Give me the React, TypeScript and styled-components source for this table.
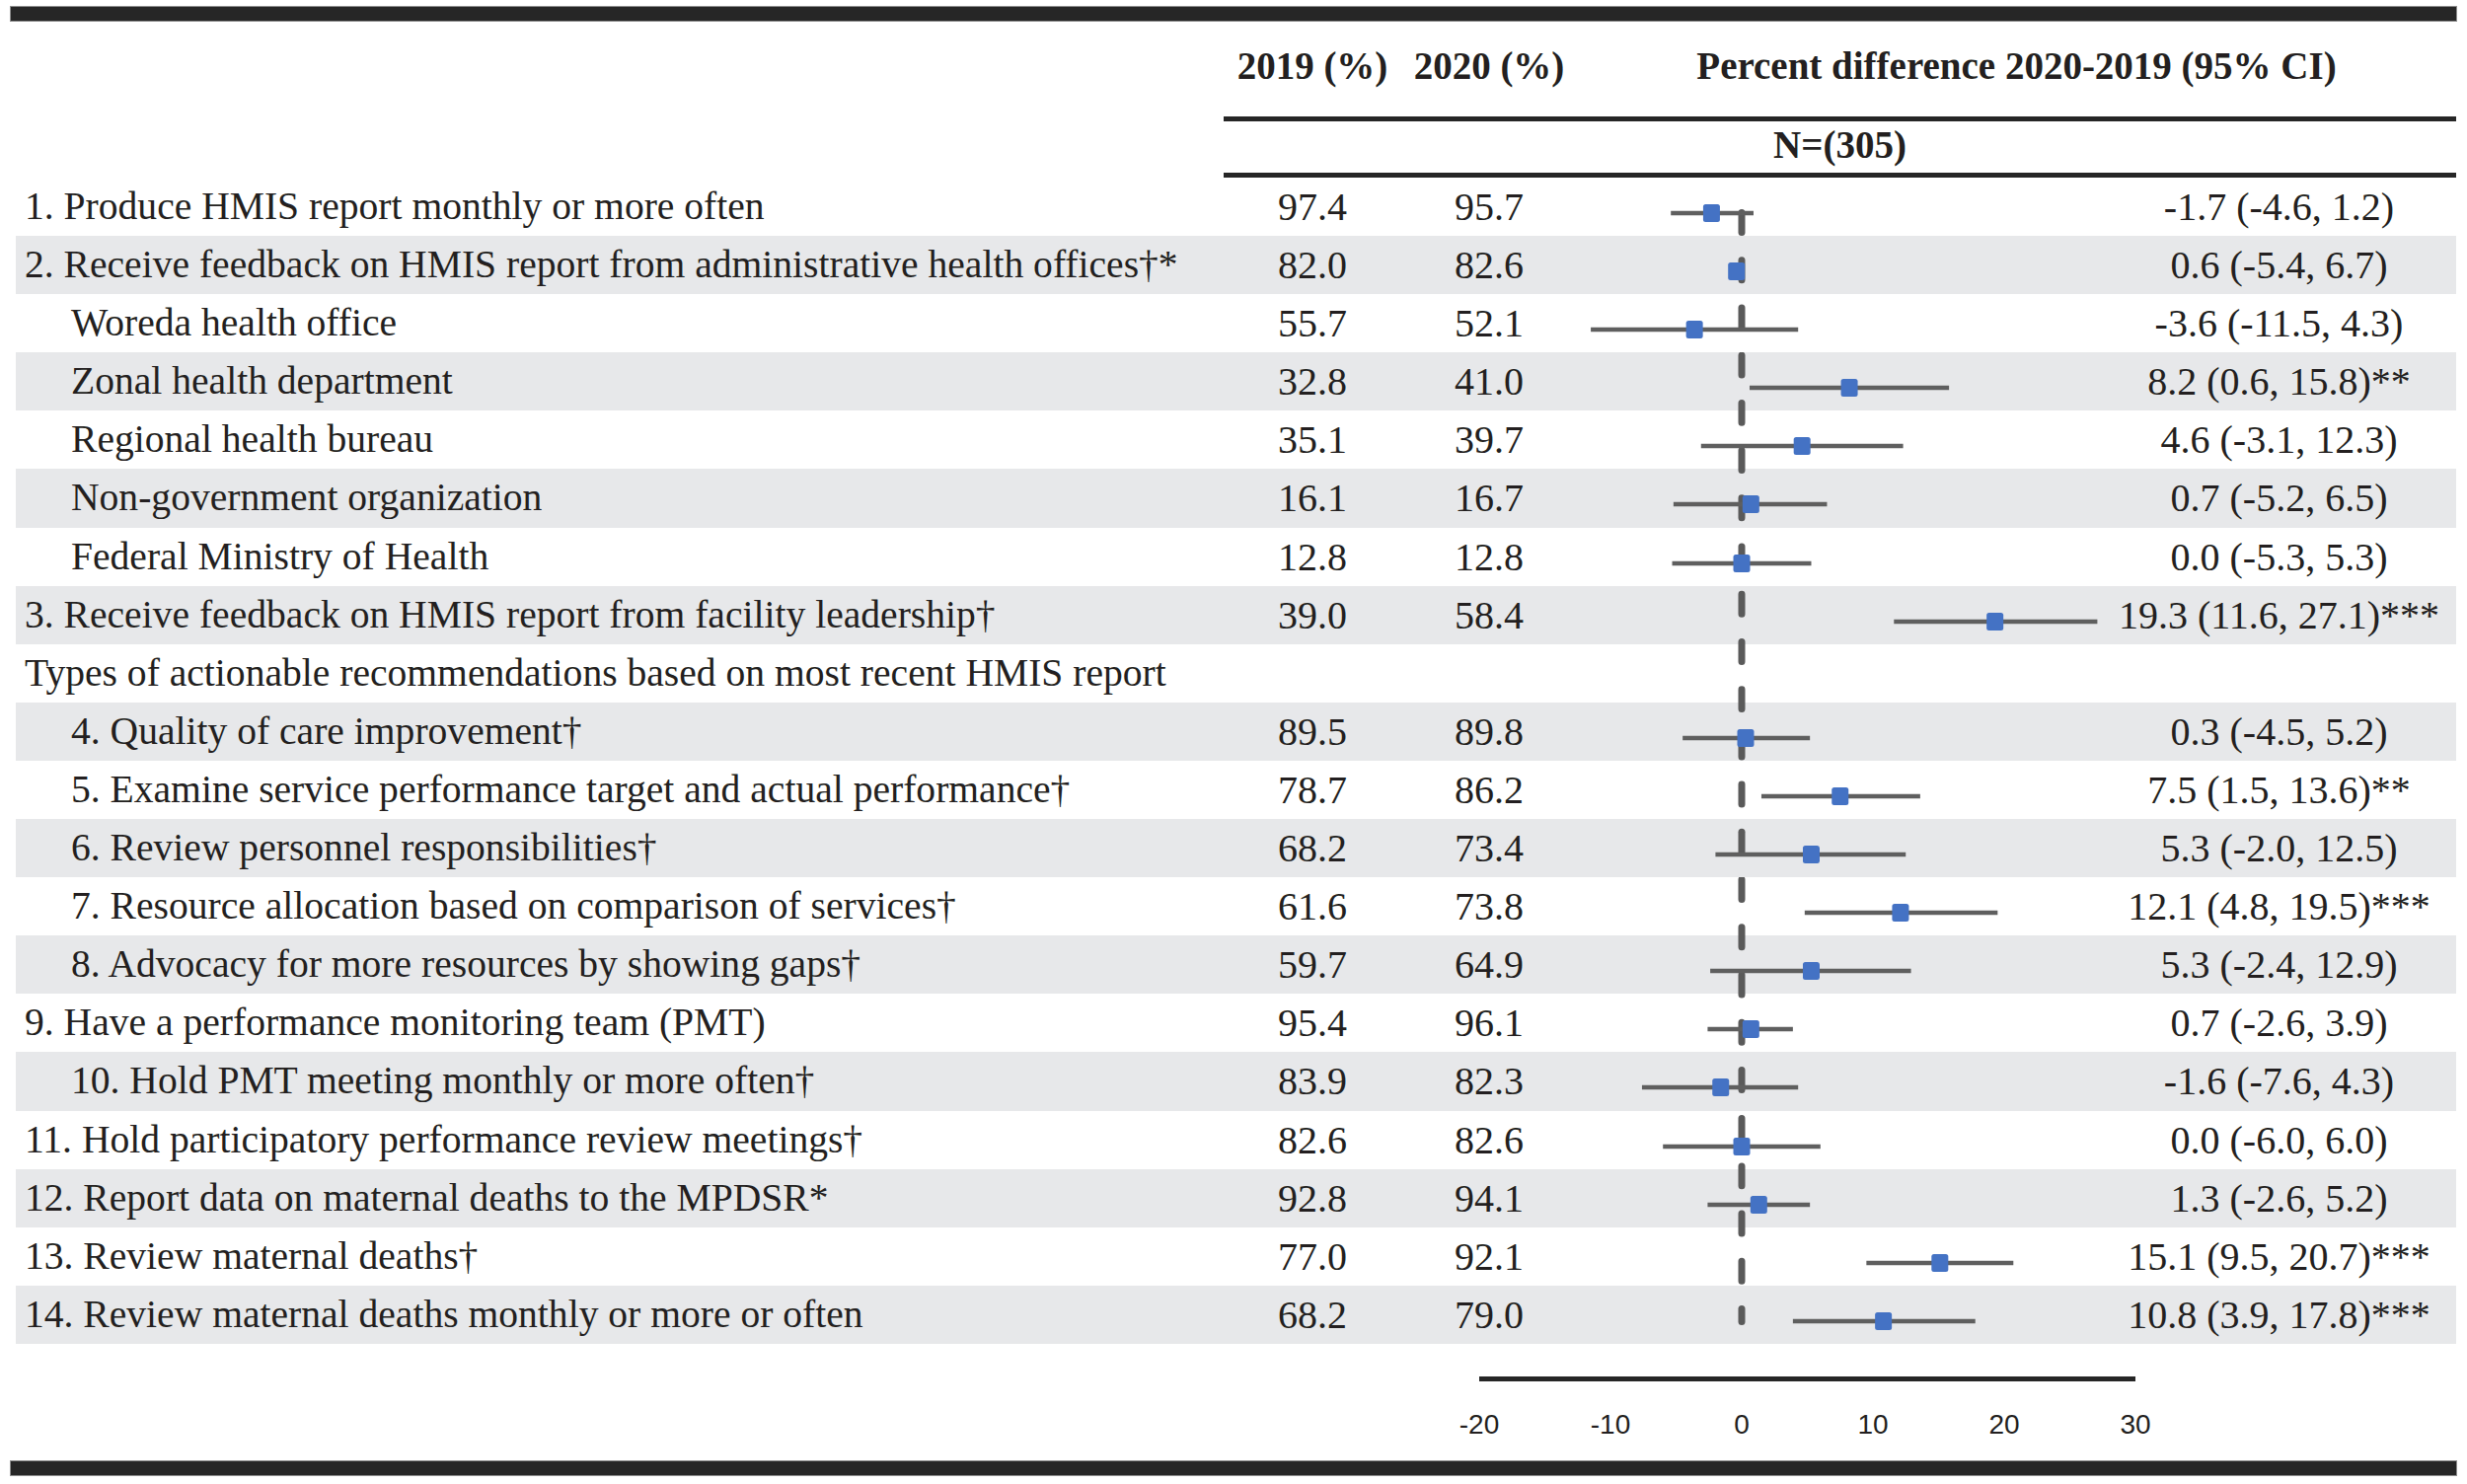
import React from "react";
import styled, { createGlobalStyle } from "styled-components";

const ROW_H = 59.1;
const ROWS_TOP = 180;
const PLOT_W = 532;
const ZERO_X = 167;
const UNIT = 13.3;
const DASH_START = 215.5;
const DASH_END = 1339.5;

const GlobalStyle = createGlobalStyle`
  html, body { margin: 0; padding: 0; background: #ffffff; }
  body { font-family: "Liberation Serif", "Times New Roman", serif; color: #231f20; }
`;

const Page = styled.div`
  width: 2500px;
  height: 1504px;
  padding: 7px 11px 0 11px;
  box-sizing: border-box;
`;

const Rule = styled.div`
  height: 14px;
  background: #262626;
  box-shadow: 0 0 0 1px #8c8c8c;
`;

const Table = styled.div`
  padding-left: 5px;
  display: flex;
  flex-direction: column;
`;

const Header = styled.div`
  display: grid;
  grid-template-columns: 1224px 1fr;
`;

const HeadRight = styled.div`
  display: flex;
  flex-direction: column;
`;

const TitleRow = styled.div`
  display: grid;
  grid-template-columns: 180px 178px 1fr;
  padding: 24px 0 29px 0;
  border-bottom: 5px solid #262626;
  font-weight: bold;
  font-size: 39px;
  line-height: 44px;
  white-space: nowrap;
`;

const HeadCell = styled.div`
  text-align: center;
`;

const NRow = styled.div`
  padding: 2px 0 6px 0;
  border-bottom: 5px solid #262626;
  font-weight: bold;
  font-size: 39px;
  line-height: 44px;
  text-align: center;
`;

const Row = styled.div<{ $shade: boolean }>`
  display: grid;
  grid-template-columns: 1224px 180px 178px ${PLOT_W}px 1fr;
  height: ${ROW_H}px;
  background: ${(p) => (p.$shade ? "#e7e8ea" : "transparent")};
  font-size: 40px;
  line-height: ${ROW_H}px;
  white-space: nowrap;
`;

const Label = styled.div<{ $indent: boolean }>`
  padding-left: ${(p) => (p.$indent ? 56 : 9)}px;
  font-size: 39.6px;
`;

const Num = styled.div`
  text-align: center;
`;

const PlotCell = styled.svg`
  display: block;
  overflow: hidden;
`;

const CiText = styled.div`
  text-align: center;
`;

const Axis = styled.div`
  display: flex;
  flex-direction: column;
  padding-top: 33px;
`;

const AxisLine = styled.div`
  margin-left: 1483px;
  width: 665px;
  height: 5px;
  background: #262626;
`;

const AxisLabels = styled.div`
  display: flex;
  margin-left: 1416.5px;
  margin-top: 28px;
  margin-bottom: 21px;
  font-family: "Liberation Sans", Arial, sans-serif;
  font-size: 28px;
  line-height: 32px;
  color: #231f20;
`;

const Tick = styled.div`
  width: 133px;
  text-align: center;
`;

type R = {
  label: string;
  indent?: boolean;
  a?: string;
  b?: string;
  est?: number;
  lo?: number;
  hi?: number;
  text?: string;
  noLine?: boolean;
};

// est/lo/hi are the plotted positions as drawn in the figure
const rows: R[] = [
  { label: "1. Produce HMIS report monthly or more often", a: "97.4", b: "95.7", est: -2.3, lo: -5.4, hi: 0.9, text: "-1.7 (-4.6, 1.2)" },
  { label: "2. Receive feedback on HMIS report from administrative health offices†*", a: "82.0", b: "82.6", est: -0.4, lo: -5.4, hi: 6.7, text: "0.6 (-5.4, 6.7)", noLine: true },
  { label: "Woreda health office", indent: true, a: "55.7", b: "52.1", est: -3.6, lo: -11.5, hi: 4.3, text: "-3.6 (-11.5, 4.3)" },
  { label: "Zonal health department", indent: true, a: "32.8", b: "41.0", est: 8.2, lo: 0.6, hi: 15.8, text: "8.2 (0.6, 15.8)**" },
  { label: "Regional health bureau", indent: true, a: "35.1", b: "39.7", est: 4.6, lo: -3.1, hi: 12.3, text: "4.6 (-3.1, 12.3)" },
  { label: "Non-government organization", indent: true, a: "16.1", b: "16.7", est: 0.7, lo: -5.2, hi: 6.5, text: "0.7 (-5.2, 6.5)" },
  { label: "Federal Ministry of Health", indent: true, a: "12.8", b: "12.8", est: 0.0, lo: -5.3, hi: 5.3, text: "0.0 (-5.3, 5.3)" },
  { label: "3. Receive feedback on HMIS report from facility leadership†", a: "39.0", b: "58.4", est: 19.3, lo: 11.6, hi: 27.1, text: "19.3 (11.6, 27.1)***" },
  { label: "Types of actionable recommendations based on most recent HMIS report" },
  { label: "4. Quality of care improvement†", indent: true, a: "89.5", b: "89.8", est: 0.3, lo: -4.5, hi: 5.2, text: "0.3 (-4.5, 5.2)" },
  { label: "5. Examine service performance target and actual performance†", indent: true, a: "78.7", b: "86.2", est: 7.5, lo: 1.5, hi: 13.6, text: "7.5 (1.5, 13.6)**" },
  { label: "6. Review personnel responsibilities†", indent: true, a: "68.2", b: "73.4", est: 5.3, lo: -2.0, hi: 12.5, text: "5.3 (-2.0, 12.5)" },
  { label: "7. Resource allocation based on comparison of services†", indent: true, a: "61.6", b: "73.8", est: 12.1, lo: 4.8, hi: 19.5, text: "12.1 (4.8, 19.5)***" },
  { label: "8. Advocacy for more resources by showing gaps†", indent: true, a: "59.7", b: "64.9", est: 5.3, lo: -2.4, hi: 12.9, text: "5.3 (-2.4, 12.9)" },
  { label: "9. Have a performance monitoring team (PMT)", a: "95.4", b: "96.1", est: 0.7, lo: -2.6, hi: 3.9, text: "0.7 (-2.6, 3.9)" },
  { label: "10. Hold PMT meeting monthly or more often†", indent: true, a: "83.9", b: "82.3", est: -1.6, lo: -7.6, hi: 4.3, text: "-1.6 (-7.6, 4.3)" },
  { label: "11. Hold participatory performance review meetings†", a: "82.6", b: "82.6", est: 0.0, lo: -6.0, hi: 6.0, text: "0.0 (-6.0, 6.0)" },
  { label: "12. Report data on maternal deaths to the MPDSR*", a: "92.8", b: "94.1", est: 1.3, lo: -2.6, hi: 5.2, text: "1.3 (-2.6, 5.2)" },
  { label: "13. Review maternal deaths†", a: "77.0", b: "92.1", est: 15.1, lo: 9.5, hi: 20.7, text: "15.1 (9.5, 20.7)***" },
  { label: "14. Review maternal deaths monthly or more or often", a: "68.2", b: "79.0", est: 10.8, lo: 3.9, hi: 17.8, text: "10.8 (3.9, 17.8)***" },
];

const xOf = (v: number) => ZERO_X + v * UNIT;

function Plot({ r, index }: { r: R; index: number }) {
  const top = ROWS_TOP + ROW_H * index;
  const y1 = Math.max(0, DASH_START - top);
  const y2 = Math.min(ROW_H, DASH_END - top);
  const cy = ROW_H / 2 + 6.5;
  return (
    <PlotCell width={PLOT_W} height={ROW_H} viewBox={`0 0 ${PLOT_W} ${ROW_H}`}>
      {y2 > y1 && (
        <line
          x1={ZERO_X}
          x2={ZERO_X}
          y1={y1}
          y2={y2}
          stroke="#5a5a5a"
          strokeWidth={7}
          strokeLinecap="round"
          strokeDasharray="20 28.3"
          strokeDashoffset={top + y1 - DASH_START}
        />
      )}
      {r.est !== undefined && !r.noLine && (
        <line x1={xOf(r.lo!)} x2={xOf(r.hi!)} y1={cy} y2={cy} stroke="#5f5f5f" strokeWidth={4.5} />
      )}
      {r.est !== undefined && (
        <rect x={xOf(r.est) - 8.5} y={cy - 9} width={17} height={18} rx={2.5} fill="#4472c4" />
      )}
    </PlotCell>
  );
}

export default function App() {
  return (
    <>
      <GlobalStyle />
      <Page>
        <Rule />
        <Table>
          <Header>
            <div />
            <HeadRight>
              <TitleRow>
                <HeadCell>2019 (%)</HeadCell>
                <HeadCell>2020 (%)</HeadCell>
                <HeadCell>Percent difference 2020-2019 (95% CI)</HeadCell>
              </TitleRow>
              <NRow>N=(305)</NRow>
            </HeadRight>
          </Header>
          {rows.map((r, i) => (
            <Row key={i} $shade={i % 2 === 1}>
              <Label $indent={!!r.indent}>{r.label}</Label>
              <Num>{r.a ?? ""}</Num>
              <Num>{r.b ?? ""}</Num>
              <Plot r={r} index={i} />
              <CiText>{r.text ?? ""}</CiText>
            </Row>
          ))}
          <Axis>
            <AxisLine />
            <AxisLabels>
              {["-20", "-10", "0", "10", "20", "30"].map((t) => (
                <Tick key={t}>{t}</Tick>
              ))}
            </AxisLabels>
          </Axis>
        </Table>
        <Rule />
      </Page>
    </>
  );
}
